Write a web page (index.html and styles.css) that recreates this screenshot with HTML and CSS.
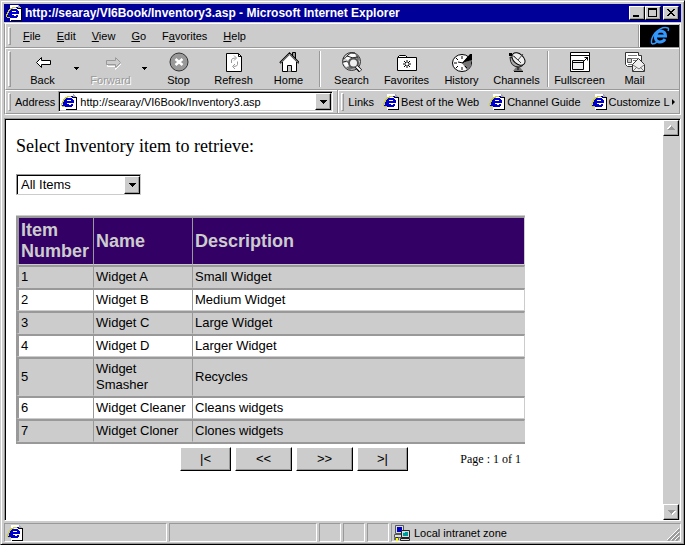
FILE: index.html
```html
<!DOCTYPE html>
<html lang="en">
<head>
<meta charset="utf-8">
<title>http://searay/VI6Book/Inventory3.asp - Microsoft Internet Explorer</title>
<link rel="stylesheet" href="styles.css">
</head>
<body>
<svg class="defs" aria-hidden="true">
  <symbol id="page" viewBox="0 0 17 16">
    <path d="M4 0h8l4 4v12H4z" fill="#fff"/>
    <path d="M12 0h1v1h1v1h1v1h1v1h-4z" fill="#aaa"/>
    <path d="M12 3h4v13H5v-1h10V4h-3z"/>
    <path d="M5 4h6v1h1v1h1v3H6v1h2v1h2v-1h2v2h-1v1H4v-1H3v-1H2V8h1V6h1V5h1zM6 6v1h4V6z" fill="#00c" fill-rule="evenodd"/>
    <path d="M10 2h2v2h-1V3h-1zM1 11h2v1h1v1H1z" fill="#00c"/>
    <path d="M6 2h4v1H7v1H5v1H4v1H3v2H2v2H1v2H0V9h1V7h1V5h1V4h1V3h2zM1 12h3v1H1z" fill="#cc3"/>
  </symbol>
  <symbol id="down" viewBox="0 0 7 4"><path d="M0 0h7v1H6v1H5v1H4v1H3V3H2V2H1V1H0z"/></symbol>
</svg>
<div class="window">
  <header class="titlebar">
    <svg class="page-icon"><use href="#page"/></svg>
    <h1>http://searay/VI6Book/Inventory3.asp - Microsoft Internet Explorer</h1>
    <button class="caption" aria-label="Minimize"><svg width="12" height="10"><path d="M2 7h6v2H2z"/></svg></button>
    <button class="caption" aria-label="Maximize"><svg width="12" height="10"><path d="M1 0h9v9H1zM2 2v6h7V2z" fill-rule="evenodd"/></svg></button>
    <button class="caption close" aria-label="Close"><svg width="12" height="10"><path d="M2 1h2v1h1v1h2V2h1V1h2v1H9v1H8v1H7v1h1v1h1v1h1v1H8V7H7V6H5v1H4v1H2V7h1V6h1V5h1V4H4V3H3V2H2z"/></svg></button>
  </header>

  <div class="bars">
    <div class="band menu-band">
      <span class="grip"></span>
      <nav class="menu">
        <a href="#"><u>F</u>ile</a><a href="#"><u>E</u>dit</a><a href="#"><u>V</u>iew</a><a href="#"><u>G</u>o</a><a href="#">F<u>a</u>vorites</a><a href="#"><u>H</u>elp</a>
      </nav>
      <div class="brand">
        <svg width="20" height="20" viewBox="0 0 20 20" fill="none" stroke="#39f">
          <path d="M15 13Q13 16.500 9 16Q5 15 5.500 10Q6.500 5 11 5Q15.500 5.500 15.500 10H6" stroke-width="3"/>
          <path d="M2 18Q0 14 5 7Q12 0 18 2Q19 3 18 5M2 18Q5 18 7 16" stroke-width="1.500"/>
        </svg>
      </div>
    </div>

    <div class="band tool-band">
      <span class="grip"></span>
      <button class="tool"><svg viewBox="0 0 20 20"><path d="M3.500 10.500l5-5v3h9v4h-9v3z" fill="#fff" stroke="#000"/></svg>Back</button>
      <button class="more" aria-label="Back history"><svg width="5" height="3"><path d="M0 0h5v1H4v1H3v1H2V2H1V1H0z"/></svg></button>
      <button class="tool" disabled><svg viewBox="0 0 20 20"><path d="M20.500 11.500l-6-6v3h-8v6h8v3z" fill="none" stroke="#fff"/><path d="M19.500 10.500l-5-5v3h-9v4h9v3z" fill="#ccc" stroke="#999"/></svg>Forward</button>
      <button class="more" aria-label="Forward history"><svg width="5" height="3"><path d="M0 0h5v1H4v1H3v1H2V2H1V1H0z"/></svg></button>
      <button class="tool"><svg viewBox="0 0 20 20"><circle cx="10" cy="10" r="9" fill="#999" stroke="#333"/><path d="M6.500 7l7 6M13.500 7l-7 6" stroke="#fff" stroke-width="2.500"/></svg>Stop</button>
      <button class="tool"><svg viewBox="0 0 20 20"><path d="M2.500 1.500h12l3 3v15h-15z" fill="#fff" stroke="#000"/><path d="M14.500 1.500v3h3" fill="none" stroke="#000"/><path d="M7.500 11V8q0-2 4-2M10 3.500L12.500 6 10 8.500M13.500 9.500v3q0 2-4 2M11 12l-2.500 2.500L11 17" fill="none" stroke="#999"/></svg>Refresh</button>
      <button class="tool"><svg viewBox="0 0 20 20"><path d="M13.500 7V.5h3v9" fill="#999" stroke="#000"/><path d="M3.500 19.500v-10l7-7 7 7v10z" fill="#fff" stroke="#000"/><path d="M1 11l9.500-9.500L20 11" fill="none" stroke="#000" stroke-width="2"/><path d="M2 10.500l8.500-8.500L19 10.500" fill="none" stroke="#ccc"/><path d="M8.500 19.500v-6h4v6" fill="#ccc" stroke="#000"/></svg>Home</button>
      <span class="sep"></span>
      <button class="tool"><svg viewBox="0 0 20 20"><circle cx="9.500" cy="9.500" r="9" fill="#ccc" stroke="#333"/><path d="M2 6l5-4 6 0 3 3-6 0-4 3zM1 11l5-1 2 4-3 2z" fill="#fff"/><path d="M13 1l4 4 1 4-3-2zM4 15l4-1 3 3-4 1z" fill="#777"/><path d="M1 7q3-1 5-4t7-2M5 4q5 3 11 1M1 10q4-2 6 1" stroke="#222" fill="none"/><circle cx="11.500" cy="11" r="4.500" fill="#eee" stroke="#555" stroke-width="2"/><path d="M14.500 14.500l4 4.500" stroke="#000" stroke-width="4"/><path d="M14.500 14.500l4 4" stroke="#fff" stroke-width="2"/></svg>Search</button>
      <button class="tool"><svg viewBox="0 0 20 20"><path d="M.5 18.500v-13l2-2h6l2 2h9v13z" fill="#fff" stroke="#000"/><path d="M1 5.500h18" stroke="#000"/><path d="M10 8v8M6 12h8M7 9l2 2M13 9l-2 2M7 15l2-2M13 15l-2-2" stroke="#000"/><path d="M9 11h2v2H9z" fill="#fff"/></svg>Favorites</button>
      <button class="tool"><svg viewBox="0 0 20 20"><ellipse cx="10" cy="11" rx="9.500" ry="8.500" fill="#fff" stroke="#000"/><path d="M10 11l9-3v6l-4 4z" fill="#777"/><path d="M10 11L18 2h2v6z" fill="#000"/><path d="M10 4v3M10 15v3M2 11h3M4 6l2 2M4 16l2-2M15 16l-2-2M6 10l5 1 5-6" fill="none" stroke="#000"/></svg>History</button>
      <button class="tool"><svg viewBox="0 0 20 20"><path d="M10 14l-4 5h10l-4-5z" fill="#777"/><path d="M7 19.500h9M11 14v4" stroke="#000"/><path d="M3 5q0 10 9 10 4 0 5-4z" fill="#aaa" stroke="#222"/><ellipse cx="11.500" cy="7" rx="5" ry="7.500" transform="rotate(-48 11.500 7)" fill="#eee" stroke="#000"/><path d="M11 8L4 2M11 8l5-6M7 4l7 7" stroke="#444"/><path d="M2 1h3v3H2z"/></svg>Channels</button>
      <span class="sep"></span>
      <button class="tool"><svg viewBox="0 0 20 20" fill="none" stroke="#000"><path d="M.5.5h19v19H.500z" fill="#fff"/><path d="M1 3.500h18"/><path d="M2.500 8.500h11v9h-11z" fill="#eee"/><path d="M3 10.500h10M14 9l4-4M14.500 5.500h3v3"/></svg>Fullscreen</button>
      <button class="tool"><svg viewBox="0 0 20 20"><path d="M.5.500h13v3h3v11H2.500l-2-2z" fill="#fff" stroke="#333"/><path d="M3 3.500h9M7 6.500h6M8 8.500h4M3 12.500h5" stroke="#777"/><path d="M2.500 6.500h4v4h-4z" fill="#ccc" stroke="#555"/><path d="M7.500 12.500l6-6 6 6v7h-12z" fill="#eee" stroke="#333"/><path d="M8 13l6 4 5-4M8 19l4-4M19 19l-4-4" fill="none" stroke="#777"/></svg>Mail</button>
    </div>

    <div class="band address-band">
      <span class="grip"></span>
      <label for="address">Address</label>
      <div class="combo">
        <svg class="page-icon"><use href="#page"/></svg>
        <input id="address" value="http://searay/VI6Book/Inventory3.asp">
        <button class="drop" aria-label="Show addresses"><svg width="7" height="4"><use href="#down"/></svg></button>
      </div>
      <div class="links">
        <span class="grip"></span>
        <span class="links-title">Links</span>
        <a href="#"><svg class="page-icon"><use href="#page"/></svg>Best of the Web</a>
        <a href="#"><svg class="page-icon"><use href="#page"/></svg>Channel Guide</a>
        <a href="#"><svg class="page-icon"><use href="#page"/></svg>Customize L</a>
        <svg class="next" width="3" height="6"><path d="M0 0l3 3-3 3z"/></svg>
      </div>
    </div>
  </div>

  <div class="view">
    <main class="document">
      <label class="prompt" for="item">Select Inventory item to retrieve:</label>
      <div class="select-box">
        <select id="item"><option>All Items</option></select>
        <span class="drop"><svg width="7" height="4"><use href="#down"/></svg></span>
      </div>
      <div class="listing">
        <table>
          <colgroup><col class="col-number"><col class="col-name"><col></colgroup>
          <thead><tr><th>Item Number</th><th>Name</th><th>Description</th></tr></thead>
          <tbody>
            <tr><td>1</td><td>Widget A</td><td>Small Widget</td></tr>
            <tr><td>2</td><td>Widget B</td><td>Medium Widget</td></tr>
            <tr><td>3</td><td>Widget C</td><td>Large Widget</td></tr>
            <tr><td>4</td><td>Widget D</td><td>Larger Widget</td></tr>
            <tr><td>5</td><td>Widget Smasher</td><td>Recycles</td></tr>
            <tr><td>6</td><td>Widget Cleaner</td><td>Cleans widgets</td></tr>
            <tr><td>7</td><td>Widget Cloner</td><td>Clones widgets</td></tr>
          </tbody>
        </table>
        <div class="pager">
          <button>|&lt;</button><button class="wide">&lt;&lt;</button><button class="wide">&gt;&gt;</button><button>&gt;|</button>
          <span class="count">Page : 1 of 1</span>
        </div>
      </div>
    </main>
    <div class="scrollbar">
      <button class="scroll" aria-label="Scroll up"><svg class="up" width="7" height="4"><use href="#down"/></svg></button>
      <button class="scroll" aria-label="Scroll down"><svg width="7" height="4"><use href="#down"/></svg></button>
    </div>
  </div>

  <footer class="status">
    <div class="pane first"><svg class="page-icon"><use href="#page"/></svg></div>
    <div class="pane second"></div>
    <div class="pane small"></div>
    <div class="pane small"></div>
    <div class="pane small"></div>
    <div class="pane zone">
      <svg width="16" height="16" viewBox="0 0 16 16"><path d="M1.500.5h8v8h-8zM.5 9.500h8v3h-8z" fill="#ddd" stroke="#555"/><path d="M3 2h5v5H3z" fill="#00c"/><path d="M7.500 5.500h8v7h-8zM6.500 13.500h9v2h-9z" fill="#ddd" stroke="#222"/><path d="M9 7h5v4H9z" fill="#099"/><path d="M9 7h2v1H9z" fill="#6ff"/><path d="M0 14h5M3 12v4" stroke="#000"/><path d="M2 13h2v3H2z" fill="#ff0"/></svg>
      <span>Local intranet zone</span>
      <svg class="resize" width="13" height="13"><path d="M1 13L13 1M5 13l8-8M9 13l4-4" stroke="#999" stroke-width="2"/><path d="M0 12L12 0M4 12l8-8M8 12l4-4" stroke="#fff"/></svg>
    </div>
  </footer>
</div>
</body>
</html>
```

FILE: styles.css
```css
* {
  box-sizing: border-box;
}

body {
  margin: 0;
  font: 11px/14px "Liberation Sans", Arial, sans-serif;
  color: #000;
}

svg {
  display: block;
  flex: none;
}

a {
  color: inherit;
  text-decoration: none;
}

button,
input,
select {
  margin: 0;
  padding: 0;
  border: 0;
  border-radius: 0;
  background: none;
  font: inherit;
  color: inherit;
}

.defs {
  position: absolute;
  width: 0;
  height: 0;
}

.page-icon {
  width: 17px;
  height: 16px;
}

.window {
  display: flex;
  flex-direction: column;
  min-height: 100vh;
  padding: 2px;
  border: 1px solid;
  border-color: #ccc #000 #000 #ccc;
  background: #ccc;
  box-shadow: inset 1px 1px #fff, inset -1px -1px #999;
}

/* Title bar */

.titlebar {
  display: flex;
  align-items: center;
  height: 18px;
  margin: 1px 1px 0;
  padding: 0 2px;
  background: #009;
  color: #fff;
}

.titlebar h1 {
  flex: 1;
  margin: 0 0 0 2px;
  font-size: 12px;
  font-weight: bold;
  white-space: nowrap;
}

.caption,
.scroll,
.drop,
.pager button {
  display: flex;
  align-items: center;
  justify-content: center;
  border: 1px solid;
  border-color: #fff #000 #000 #fff;
  background: #ccc;
  box-shadow: inset -1px -1px #999;
}

.caption {
  width: 16px;
  height: 14px;
  color: #000;
}

.close {
  margin-left: 2px;
}

/* Toolbars */

.bars {
  margin: 1px 1px 0;
  border: 1px solid;
  border-color: #fff #fff #fff #999;
}

.band {
  display: flex;
  align-items: center;
  border-bottom: 1px solid #999;
  border-left: 1px solid #fff;
  border-right: 1px solid #999;
  box-shadow: 0 1px #fff;
}

.grip {
  flex: none;
  align-self: stretch;
  width: 3px;
  margin: 3px 4px 2px 2px;
  border: 1px solid;
  border-color: #fff #999 #999 #fff;
}

.menu-band {
  height: 24px;
}

.menu {
  display: flex;
  flex: 1;
  gap: 16px;
  padding-left: 8px;
}

.brand {
  display: flex;
  align-items: center;
  justify-content: center;
  align-self: stretch;
  width: 40px;
  margin-top: 1px;
  border-left: 1px solid #fff;
  background: #000;
  box-shadow: -1px 0 #999;
}

.tool-band {
  height: 42px;
}

.tool {
  display: flex;
  flex-direction: column;
  align-items: center;
  gap: 1px;
  width: 55px;
  padding-top: 1px;
}

.tool svg {
  width: 20px;
  height: 20px;
}

.tool:disabled {
  color: #999;
  text-shadow: 1px 1px #fff;
}

.more {
  display: flex;
  justify-content: center;
  width: 13px;
}

.sep {
  width: 2px;
  height: 36px;
  margin: 0 3px;
  border-left: 1px solid #999;
  border-right: 1px solid #fff;
}

.address-band {
  height: 24px;
}

.combo {
  display: flex;
  align-items: center;
  width: 275px;
  height: 21px;
  margin-left: 3px;
  padding: 0 1px 0 2px;
  border: 1px solid;
  border-color: #999 #fff #fff #999;
  background: #fff;
  box-shadow: inset 1px 1px #000, inset -1px -1px #ccc;
}

.combo input {
  flex: 1;
  min-width: 0;
  margin-left: 2px;
  outline: 0;
}

.drop {
  width: 16px;
  height: 17px;
}

.links {
  display: flex;
  flex: 1;
  align-items: center;
  align-self: stretch;
  margin-left: 4px;
  border-left: 1px solid #999;
  box-shadow: inset 1px 0 #fff;
}

.links-title {
  margin-right: 9px;
}

.links .grip {
  margin-left: 3px;
}

.links a {
  display: flex;
  align-items: center;
  gap: 1px;
  margin-right: 10px;
  white-space: nowrap;
}

.links a:nth-of-type(3) {
  margin-right: 2px;
}

/* Document */

.view {
  display: flex;
  flex: 1;
  margin: 3px 1px 0;
  border: 1px solid;
  border-color: #999 #fff #fff #999;
  background: #fff;
  box-shadow: inset 1px 1px #000;
}

.document {
  flex: 1;
  padding: 17px 11px 0;
  font-size: 13px;
  line-height: 16px;
}

.prompt {
  display: block;
  font: 18px/20px "Liberation Serif", "Times New Roman", serif;
}

.select-box {
  position: relative;
  width: 125px;
  height: 21px;
  margin: 18px 0 20px;
}

.select-box select {
  width: 100%;
  height: 100%;
  padding-left: 4px;
  appearance: none;
  border: 1px solid;
  border-color: #999 #ccc #ccc #999;
  background: #fff;
  box-shadow: inset 1px 1px #000;
}

.select-box .drop {
  position: absolute;
  top: 2px;
  right: 1px;
  height: 18px;
  pointer-events: none;
}

.listing {
  width: 509px;
}

table {
  width: 100%;
  table-layout: fixed;
  border-spacing: 0;
  border-top: 1px solid #ccc;
  border-bottom: 2px solid #999;
}

.col-number {
  width: 77px;
}

.col-name {
  width: 99px;
}

th,
td {
  padding: 2px 0 2px 2px;
  border: solid;
  border-width: 2px 0 1px 1px;
  border-color: #999 #ccc #ccc #999;
  text-align: left;
}

th:first-child,
td:first-child {
  border-left-width: 3px;
}

th:last-child,
td:last-child {
  border-right-width: 1px;
}

th {
  background: #306;
  color: #ccc;
  font-size: 18px;
  line-height: 21px;
}

tbody tr:nth-child(odd) {
  background: #ccc;
}

.pager {
  display: flex;
  align-items: center;
  gap: 4px;
  margin-top: 3px;
  padding: 0 4px 0 164px;
}

.pager button {
  width: 51px;
  height: 24px;
}

.pager .wide {
  width: 57px;
}

.count {
  margin-left: auto;
  font: 12px/16px "Liberation Serif", "Times New Roman", serif;
}

.scrollbar {
  display: flex;
  flex-direction: column;
  justify-content: space-between;
  width: 17px;
  margin-top: 1px;
  background: #ccc;
}

.scroll {
  width: 16px;
  height: 16px;
}

.scroll svg {
  fill: #999;
  filter: drop-shadow(1px 1px #fff);
}

.up {
  transform: rotate(180deg);
}

/* Status bar */

.status {
  display: flex;
  gap: 2px;
  height: 19px;
  margin: 2px 1px 0;
}

.pane {
  display: flex;
  align-items: center;
  border: 1px solid;
  border-color: #999 #fff #fff #999;
}

.first {
  width: 163px;
  padding-left: 2px;
}

.second {
  width: 148px;
}

.small {
  width: 22px;
}

.zone {
  flex: 1;
  gap: 4px;
  padding-left: 2px;
}

.resize {
  align-self: flex-end;
  margin-left: auto;
}
```
